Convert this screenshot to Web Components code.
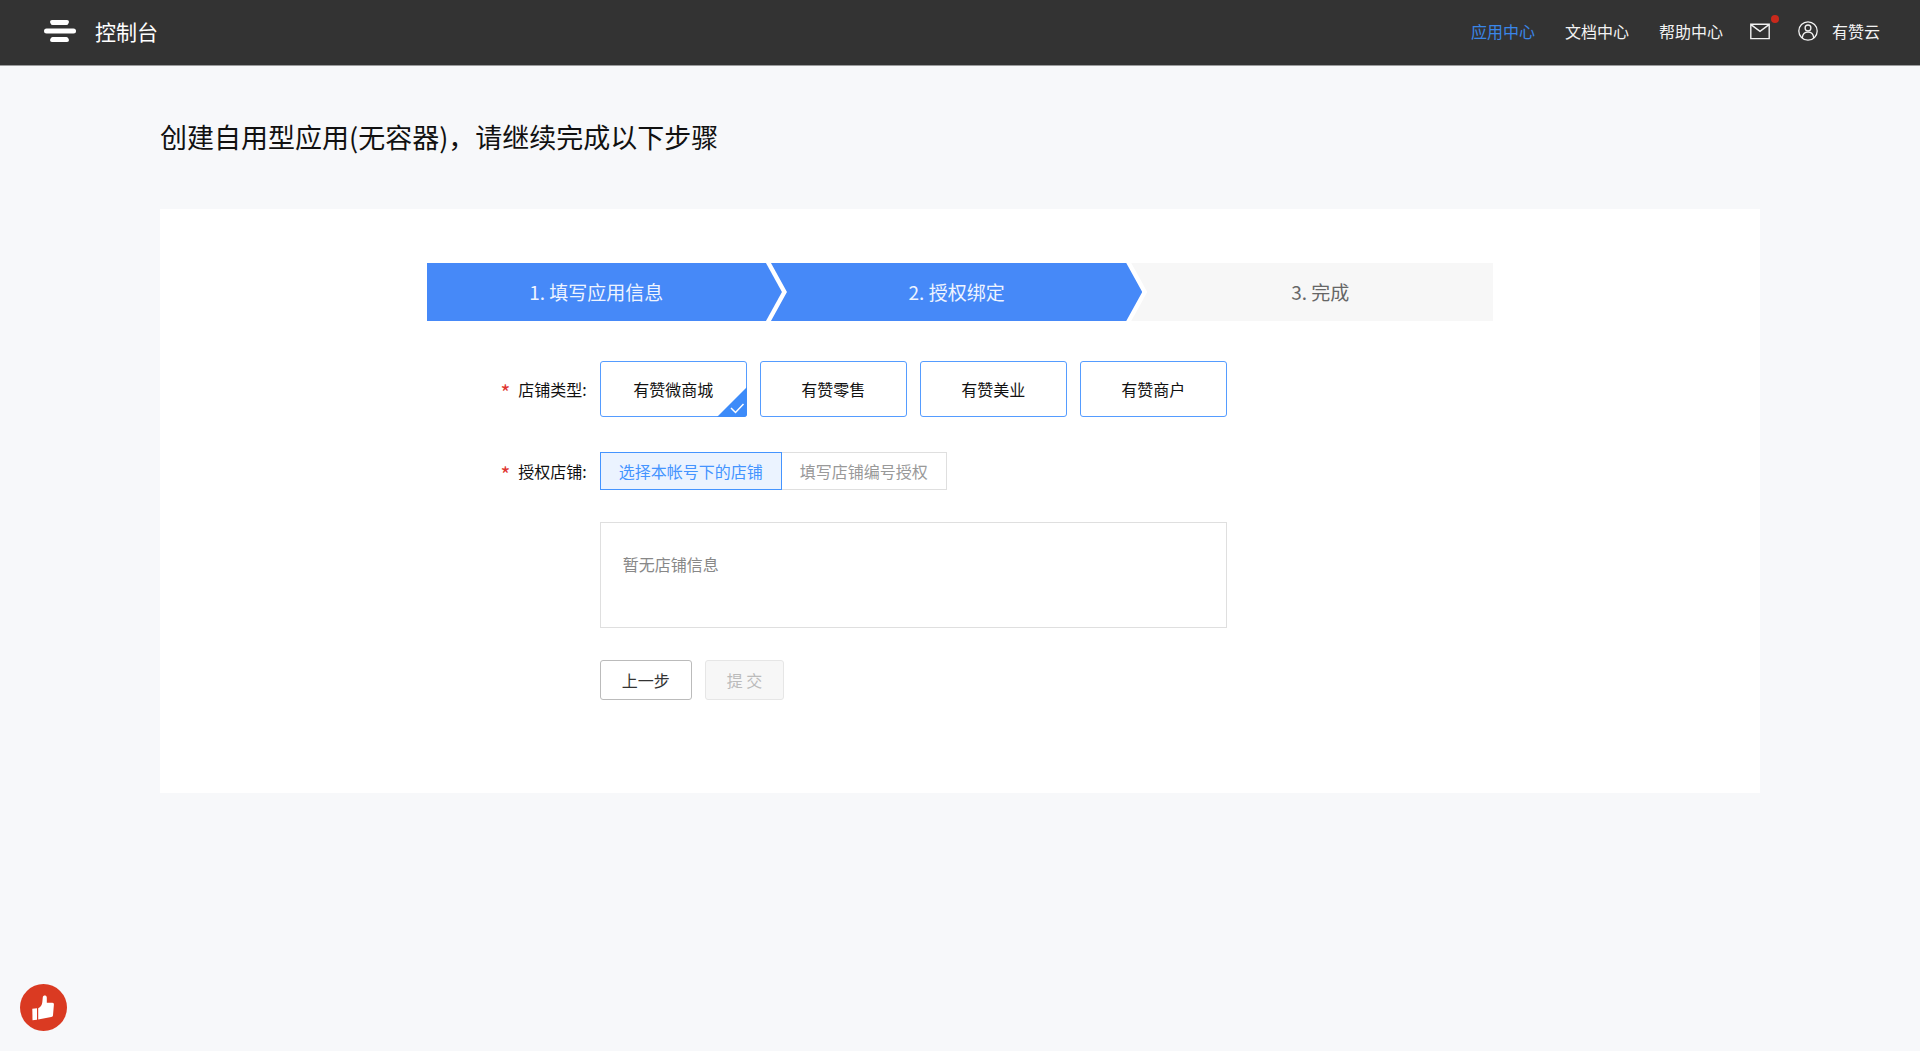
<!DOCTYPE html>
<html lang="zh-CN">
<head>
<meta charset="utf-8">
<meta name="viewport" content="width=device-width, initial-scale=1">
<title>控制台</title>
<style>
  :root {
    --blue: #4689f8;
    --line-blue: #559cff;
    --line: #dfdfdf;
  }
  html { background: #f7f8fa; }
  body {
    margin: 0;
    min-height: 100vh;
    font: 16px/24px "Noto Sans CJK SC", sans-serif;
    color: #111;
  }
</style>
</head>
<body>
<console-header heading="控制台">
  <nav-link href="#apps" active>应用中心</nav-link>
  <nav-link href="#docs">文档中心</nav-link>
  <nav-link href="#help">帮助中心</nav-link>
  <span slot="user">有赞云</span>
</console-header>

<page-main heading="创建自用型应用(无容器)，请继续完成以下步骤">
  <step-bar>
    <step-item done first>1. 填写应用信息</step-item>
    <step-item done>2. 授权绑定</step-item>
    <step-item last>3. 完成</step-item>
  </step-bar>
  <form-row label="店铺类型:" required large>
    <choice-cards label="店铺类型" options="有赞微商城,有赞零售,有赞美业,有赞商户"></choice-cards>
  </form-row>
  <form-row label="授权店铺:" required>
    <choice-tabs label="授权店铺" options="选择本帐号下的店铺,填写店铺编号授权"></choice-tabs>
  </form-row>
  <form-row><empty-panel>暂无店铺信息</empty-panel></form-row>
  <form-row>
    <action-button>上一步</action-button>
    <action-button disabled>提 交</action-button>
  </form-row>
</page-main>

<like-button></like-button>

<script>
const define = (name, render) => customElements.define(name, class extends HTMLElement {
  connectedCallback() {
    if (this.shadowRoot) return;
    this.attachShadow({ mode: 'open' }).innerHTML =
      '<style>*{box-sizing:border-box}:host{box-sizing:border-box}</style>' + render(this);
  }
});

define('console-header', el => `
  <style>
    :host { display: block; background: #333; border-bottom: 1px solid #9b9c9d; color: #fff; }
    header { display: flex; align-items: center; justify-content: space-between; height: 65px; padding: 0 40px 4px 44px; }
    .brand, .right, nav, .user { display: flex; align-items: center; }
    .brand { gap: 19px; font-size: 21px; line-height: 32px; color: #fff; text-decoration: none; }
    svg { display: block; }
    nav { gap: 30px; }
    .right { color: #f2f2f2; }
    button { border: 0; padding: 0; background: none; color: inherit; font: inherit; cursor: pointer; }
    .mail { position: relative; margin: 0 28px 0 27px; }
    .dot { position: absolute; right: -9px; top: -7px; width: 8px; height: 8px; border-radius: 50%; background: #c9291c; }
    .user { gap: 14px; }
  </style>
  <header>
    <a class="brand" href="#home">
      <svg width="32" height="24" viewBox="0 0 32 24" fill="#fff" aria-hidden="true">
        <path d="M8 1h15q2 0 2 2l-.6 1.500q-.5 1.500-2 1.500H8.600q-1.500 0-2-1.500L6 3q0-2 2-2z"/>
        <rect x="0" y="9.500" width="32" height="5" rx="2.500"/>
        <path d="M8.600 18h13.800q1.500 0 2 1.500L25 21q0 2-2 2H8q-2 0-2-2l.6-1.500q.5-1.500 2-1.500z"/>
      </svg>
      <span>${el.getAttribute('heading')}</span>
    </a>
    <div class="right">
      <nav><slot></slot></nav>
      <button class="mail" type="button" aria-label="消息">
        <svg width="20" height="18" viewBox="0 0 20 18" fill="none" stroke="currentColor" stroke-width="1.400"><path d="M.8 2.200h18.400v14.400H.8zM1 2.600l9 6.800 9-6.800"/></svg>
        <i class="dot"></i>
      </button>
      <button class="user" type="button">
        <svg width="20" height="20" viewBox="0 0 20 20" fill="none" stroke="currentColor" stroke-width="1.300" aria-hidden="true"><circle cx="10" cy="10" r="9.200"/><circle cx="10" cy="6.900" r="2.900"/><path d="M4.300 17c.3-3.900 2.400-6 5.700-6s5.400 2.100 5.700 6"/></svg>
        <slot name="user"></slot>
      </button>
    </div>
  </header>`);

define('nav-link', el => `
  <style>
    :host { display: block; }
    a { color: #f2f2f2; text-decoration: none; }
    :host([active]) a { color: #3a86e8; }
  </style>
  <a href="${el.getAttribute('href')}"><slot></slot></a>`);

define('page-main', el => `
  <style>
    :host { display: block; padding: 51px 160px; }
    h1 { margin: 0 0 52px; font-size: 27px; line-height: 40px; font-weight: 400; color: #111; }
    section { background: #fff; padding: 54px 0 93px; }
    form { width: 66.667%; margin: 0 auto; }
  </style>
  <main>
    <h1>${el.getAttribute('heading')}</h1>
    <section><form><slot></slot></form></section>
  </main>`);

define('step-bar', () => `
  <style>:host { display: flex; margin-bottom: 40px; }</style>
  <slot></slot>`);

define('step-item', () => `
  <style>
    :host {
      flex: 100 1 0; padding: 0 16px; height: 58px; line-height: 58px; margin-left: -11px;
      font-size: 19px; text-align: center; background: #f7f7f7; color: #666;
      clip-path: polygon(0 0, calc(100% - 16px) 0, 100% 50%, calc(100% - 16px) 100%, 0 100%, 16px 50%);
    }
    :host([done]) { background: var(--blue); color: #eef4ff; }
    :host([first]) {
      margin-left: 0; padding-left: 0;
      clip-path: polygon(0 0, calc(100% - 16px) 0, 100% 50%, calc(100% - 16px) 100%, 0 100%);
    }
    :host([last]) { flex-grow: 102; padding-right: 0; clip-path: polygon(0 0, 100% 0, 100% 100%, 0 100%, 16px 50%); }
  </style>
  <slot></slot>`);

define('form-row', el => `
  <style>
    :host { display: flex; align-items: center; gap: 13px; margin-bottom: 32px; }
    :host([large]) { margin-bottom: 35px; }
    :host(:last-child) { margin-bottom: 0; }
    .label { flex: 0 0 15%; display: flex; align-items: center; justify-content: flex-end; gap: 8px; }
    .star { padding-top: 6px; font-size: 21px; line-height: 18px; color: #e0352f; }
    .field { flex: 1; display: flex; gap: 13px; }
  </style>
  <div class="label">${el.hasAttribute('required') ? '<span class="star">*</span>' : ''}<span>${el.getAttribute('label') || ''}</span></div>
  <div class="field"><slot></slot></div>`);

const radios = (el, mark) => el.getAttribute('options').split(',').map((text, i) => `
  <label><input type="radio" name="choice" value="${i}"${i ? '' : ' checked'}><span>${text}</span>${mark}</label>`).join('');

define('choice-cards', el => `
  <style>
    :host { display: block; }
    .group { display: flex; gap: 13px; }
    label {
      position: relative; display: flex; align-items: center; justify-content: center;
      width: 147px; height: 56px; border: 1px solid var(--line-blue); border-radius: 3px; cursor: pointer;
    }
    input { position: absolute; inset: 0; margin: 0; opacity: 0; }
    svg { position: absolute; right: -1px; bottom: -1px; display: none; }
    input:checked ~ svg { display: block; }
  </style>
  <div class="group" role="radiogroup" aria-label="${el.getAttribute('label')}">
    ${radios(el, `<svg width="30" height="30" viewBox="0 0 30 30" aria-hidden="true"><path d="M30 0v27q0 3-3 3H0z" fill="#3d8bf9"/><path d="M14 21l4.500 4.500 8-8.500" fill="none" stroke="#fff" stroke-width="1.500"/></svg>`)}
  </div>`);

define('choice-tabs', el => `
  <style>
    :host { display: block; }
    .group { display: flex; }
    label { position: relative; cursor: pointer; }
    label + label { margin-left: -1px; }
    input { position: absolute; inset: 0; margin: 0; opacity: 0; }
    span { display: block; padding: 6px 18px; border: 1px solid var(--line); color: #999; }
    input:checked + span { position: relative; border-color: #4494ff; background: #ebf3ff; color: #4494ff; }
    label:has(input:checked) { z-index: 1; }
  </style>
  <div class="group" role="radiogroup" aria-label="${el.getAttribute('label')}">${radios(el, '')}</div>`);

define('empty-panel', () => `
  <style>:host { display: block; width: 627px; min-height: 106px; padding: 29px 22px; border: 1px solid var(--line); color: #888; }</style>
  <slot></slot>`);

define('action-button', el => `
  <style>
    :host { display: block; }
    button { padding: 7px 21px; border: 1px solid #bbb; border-radius: 3px; background: #fff; font: inherit; color: #333; cursor: pointer; }
    button:disabled { border-color: #e6e6e6; background: #f7f7f7; color: #bbb; cursor: default; }
  </style>
  <button type="button"${el.hasAttribute('disabled') ? ' disabled' : ''}><slot></slot></button>`);

define('like-button', () => `
  <style>
    :host { position: fixed; left: 20px; bottom: 20px; }
    button { display: block; width: 47px; height: 47px; padding: 0; border: 0; border-radius: 50%; background: #da3a22; cursor: pointer; }
    svg { display: block; }
  </style>
  <button type="button" aria-label="点赞">
    <svg width="47" height="47" viewBox="0 0 47 47" fill="#fff"><path d="M12.300 24.800l4.700-.6v11.600l-4.500.4z"/><path d="M18.200 24.200c2.300-1 3.800-3 4.100-6l.5-5c.2-2.300 3.800-2.300 4 .2v5.400h5.500c1.300 0 1.700.9 1.600 2l-.9 10.500c-.1 1.200-.7 1.600-1.800 1.800l-13 2.300z"/></svg>
  </button>`);
</script>
</body>
</html>
